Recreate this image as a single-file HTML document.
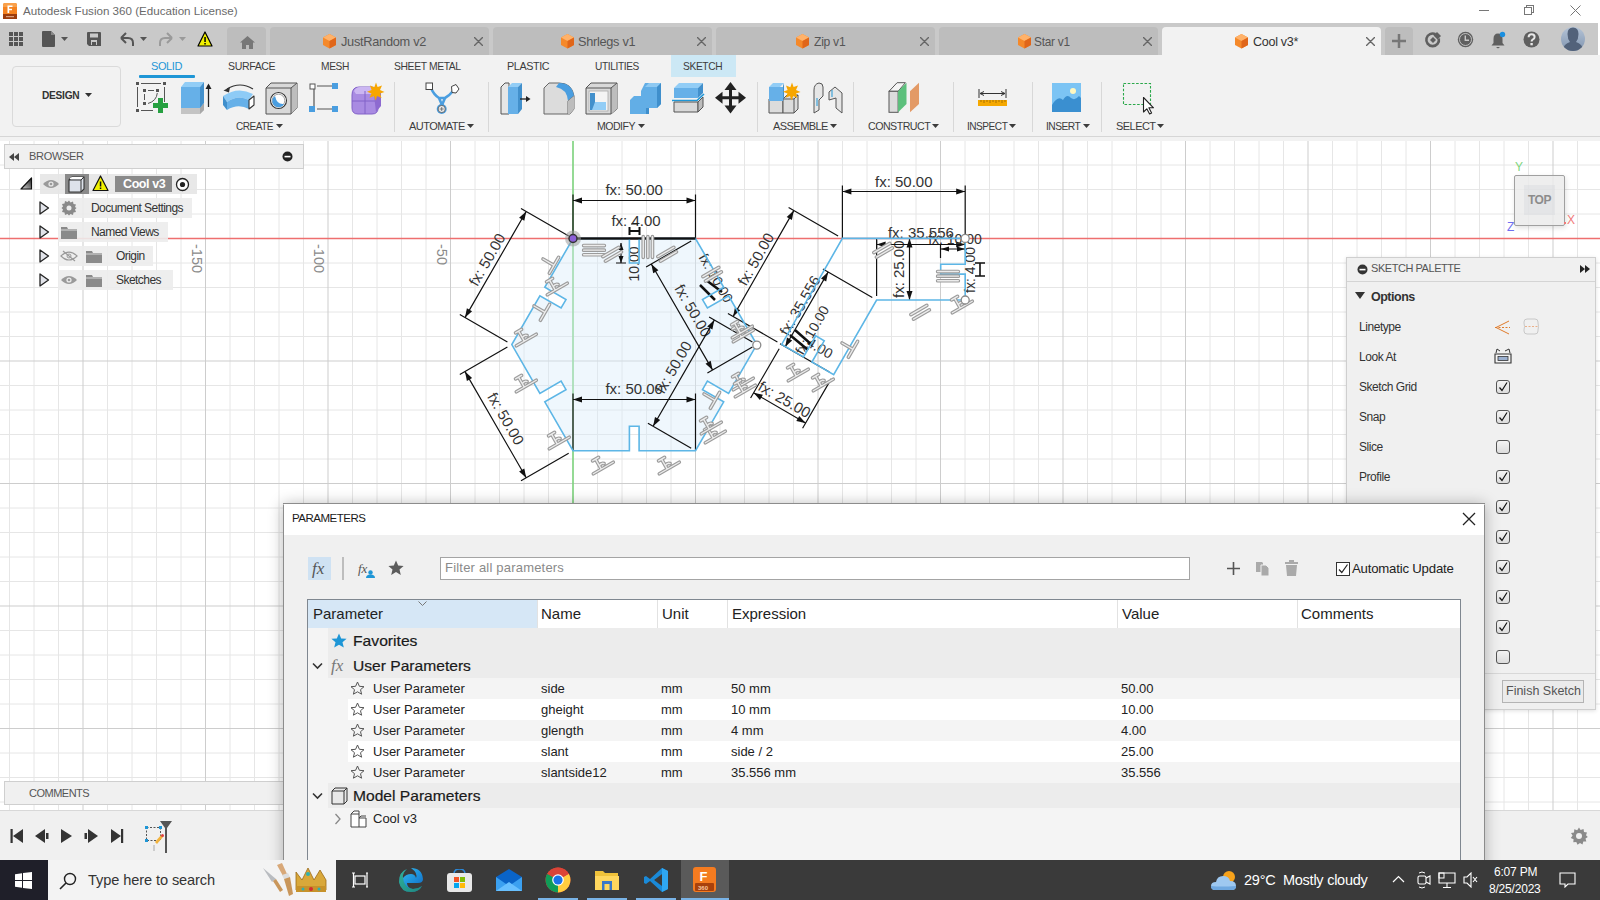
<!DOCTYPE html>
<html><head><meta charset="utf-8">
<style>
*{margin:0;padding:0;box-sizing:border-box}
html,body{width:1600px;height:900px;overflow:hidden;background:#fff;font-family:"Liberation Sans",sans-serif;position:relative}
.a{position:absolute}
.t{position:absolute;white-space:nowrap;line-height:1}
#title{left:0;top:0;width:1600px;height:23px;background:#fff}
#tabbar{left:0;top:23px;width:1600px;height:32px;background:#c9c9c9}
.tab{position:absolute;top:4px;height:28px;background:#bdbdbd;border-radius:4px 4px 0 0}
.tab .tx{position:absolute;top:8px;font-size:13.2px;letter-spacing:-0.3px;color:#555;white-space:nowrap;line-height:1}
#toolbar{left:0;top:55px;width:1600px;height:82px;background:#f2f2f2;border-bottom:1px solid #d6d6d6}
.tl{position:absolute;top:7px;font-size:11px;color:#3c3c3c;line-height:1;white-space:nowrap}
.gl{position:absolute;top:66px;font-size:11px;color:#3c3c3c;line-height:1;white-space:nowrap}
.sep{position:absolute;top:27px;width:1px;height:50px;background:#d8d8d8}
#canvas{left:0;top:137px;width:1600px;height:673px;background:#fff;overflow:hidden}
#timeline{left:0;top:810px;width:1600px;height:50px;background:#f0f0f0;border-top:1px solid #d8d8d8}
#taskbar{left:0;top:860px;width:1600px;height:40px;background:#3a3a3a}
</style></head><body>
<svg width="0" height="0" style="position:absolute"><defs><g id="cube"><path d="M7.5 1L14 4.5V12L7.5 15.5L1 12V4.5Z" fill="#f5892a"/><path d="M7.5 1L14 4.5L7.5 8L1 4.5Z" fill="#ffb26a"/><path d="M7.5 8L14 4.5V12L7.5 15.5Z" fill="#e0661a"/></g><g id="xx"><path d="M0.5 0.5L8.5 8.5M8.5 0.5L0.5 8.5" stroke="#666" stroke-width="1.4" stroke-linecap="round"/></g></defs></svg>
<!-- TITLE BAR -->
<div id="title" class="a">
 <svg class="a" style="left:2px;top:2px" width="16" height="18"><path d="M1 3Q1 1 3 1H13Q15 1 15 3V16H1Z" fill="#f5821f"/><path d="M1 3Q1 1 3 1H13Q15 1 15 3V5H1Z" fill="#f9a04a"/><rect x="1" y="12" width="14" height="5" fill="#9c3b0c"/><path d="M5.5 3.5H10.5V5H7.2V6.8H10V8.3H7.2V11H5.5Z" fill="#fff"/><rect x="4" y="14" width="8" height="1.2" fill="#d9a080"/></svg>
 <div class="t" style="left:23px;top:5px;font-size:11.6px;color:#6a6a6a">Autodesk Fusion 360 (Education License)</div>
 <div class="a" style="left:1479px;top:10px;width:10px;height:1px;background:#777"></div>
 <div class="a" style="left:1526px;top:5px;width:8px;height:8px;border:1px solid #777"></div>
 <div class="a" style="left:1524px;top:7px;width:8px;height:8px;border:1px solid #777;background:#fff"></div>
 <svg class="a" style="left:1570px;top:5px" width="11" height="11"><path d="M0.5 0.5L10.5 10.5M10.5 0.5L0.5 10.5" stroke="#777" stroke-width="1"/></svg>
</div>
<!-- TAB BAR -->
<div id="tabbar" class="a">
 <svg class="a" style="left:9px;top:9px" width="15" height="15"><g fill="#555"><rect x="0" y="0" width="4" height="4"/><rect x="5" y="0" width="4" height="4"/><rect x="10" y="0" width="4" height="4"/><rect x="0" y="5" width="4" height="4"/><rect x="5" y="5" width="4" height="4"/><rect x="10" y="5" width="4" height="4"/><rect x="0" y="10" width="4" height="4"/><rect x="5" y="10" width="4" height="4"/><rect x="10" y="10" width="4" height="4"/></g></svg>
 <svg class="a" style="left:42px;top:8px" width="28" height="17"><path d="M0 1Q0 0 1 0H9L13 4V15Q13 16 12 16H1Q0 16 0 15Z" fill="#555"/><path d="M9 0V4H13" fill="#888"/><path d="M19 6H26L22.5 10Z" fill="#555"/></svg>
 <svg class="a" style="left:87px;top:9px" width="15" height="15"><path d="M0 1Q0 0 1 0H13Q14 0 14 1V14H2L0 12Z" fill="#555"/><rect x="3" y="1.5" width="8" height="4" fill="#c9c9c9"/><rect x="4" y="8" width="6" height="5" fill="#c9c9c9"/><rect x="5" y="10" width="4" height="3" fill="#555"/></svg>
 <svg class="a" style="left:120px;top:9px" width="28" height="15"><path d="M1 6L6 1M1 6L6 11M1 6H8Q13 6 13 11V14" stroke="#555" stroke-width="2" fill="none"/><path d="M20 5H27L23.5 9Z" fill="#555"/></svg>
 <svg class="a" style="left:159px;top:9px" width="28" height="15"><path d="M13 6L8 1M13 6L8 11M13 6H6Q1 6 1 11V14" stroke="#9a9a9a" stroke-width="2" fill="none"/><path d="M20 5H27L23.5 9Z" fill="#9a9a9a"/></svg>
 <svg class="a" style="left:197px;top:8px" width="16" height="16"><path d="M8 1L15 15H1Z" fill="#f0f000" stroke="#000" stroke-width="1.2" stroke-linejoin="round"/><rect x="7.3" y="6" width="1.5" height="5" fill="#000"/><rect x="7.3" y="12" width="1.5" height="1.5" fill="#000"/></svg>
 <div class="tab" style="left:227px;width:39px"><svg class="a" style="left:13px;top:9px" width="15" height="13"><path d="M7.5 0L15 6.5H13V13H9V9H6V13H2V6.5H0Z" fill="#777"/></svg></div>
 <div class="tab" style="left:270px;width:219px"><svg class="a cube" style="left:52px;top:6px" width="15" height="16"><use href="#cube"/></svg><div class="tx" style="left:71px;transform:scaleX(0.97);transform-origin:0 0">JustRandom v2</div><svg class="a" style="left:204px;top:10px" width="9" height="9"><use href="#xx"/></svg></div>
 <div class="tab" style="left:493px;width:219px"><svg class="a" style="left:67px;top:6px" width="15" height="16"><use href="#cube"/></svg><div class="tx" style="left:85px;transform:scaleX(0.966);transform-origin:0 0">Shrlegs v1</div><svg class="a" style="left:204px;top:10px" width="9" height="9"><use href="#xx"/></svg></div>
 <div class="tab" style="left:716px;width:219px"><svg class="a" style="left:79px;top:6px" width="15" height="16"><use href="#cube"/></svg><div class="tx" style="left:98px;transform:scaleX(0.92);transform-origin:0 0">Zip v1</div><svg class="a" style="left:204px;top:10px" width="9" height="9"><use href="#xx"/></svg></div>
 <div class="tab" style="left:939px;width:219px"><svg class="a" style="left:78px;top:6px" width="15" height="16"><use href="#cube"/></svg><div class="tx" style="left:95px;transform:scaleX(0.9);transform-origin:0 0">Star v1</div><svg class="a" style="left:204px;top:10px" width="9" height="9"><use href="#xx"/></svg></div>
 <div class="tab" style="left:1162px;width:219px;background:#f2f2f2"><svg class="a" style="left:72px;top:6px" width="15" height="16"><use href="#cube"/></svg><div class="tx" style="left:91px;color:#333;transform:scaleX(0.95);transform-origin:0 0">Cool v3*</div><svg class="a" style="left:204px;top:10px" width="9" height="9"><use href="#xx"/></svg></div>
 <div class="tab" style="left:1385px;width:28px;background:#bdbdbd"><svg class="a" style="left:7px;top:7px" width="14" height="14"><path d="M7 0V14M0 7H14" stroke="#777" stroke-width="2.5"/></svg></div>
 <svg class="a" style="left:1424px;top:8px" width="18" height="18"><path d="M11.5 3.2A6.3 6.3 0 1 0 14.8 7.5" fill="none" stroke="#5f5f5f" stroke-width="2.6"/><path d="M9.5 4.5L13 1L17 5L13.5 8.5Z" fill="#5f5f5f"/><path d="M6 9L9 6L12 9L9 12Z" fill="#5f5f5f"/></svg>
 <svg class="a" style="left:1457px;top:8px" width="17" height="17"><circle cx="8.5" cy="8.5" r="7.7" fill="#5f5f5f"/><circle cx="8.5" cy="8.5" r="6" fill="none" stroke="#c9c9c9" stroke-width="0.9"/><path d="M8.3 4.5V9.3H12" stroke="#c9c9c9" stroke-width="1.4" fill="none"/></svg>
 <svg class="a" style="left:1490px;top:8px" width="17" height="18"><path d="M8 2.5Q12.5 2.5 12.5 8V12L14.5 14.5H1.5L3.5 12V8Q3.5 2.5 8 2.5Z" fill="#5f5f5f"/><path d="M6 16H10L8 17.5Z" fill="#5f5f5f"/><circle cx="12.5" cy="3.5" r="2.7" fill="#1a8fe0"/></svg>
 <svg class="a" style="left:1523px;top:8px" width="17" height="17"><circle cx="8.5" cy="8.5" r="8" fill="#5f5f5f"/><path d="M5.6 6.3Q5.6 3.3 8.6 3.3Q11.6 3.3 11.6 6Q11.6 7.7 9.6 8.7Q8.6 9.3 8.6 10.6" fill="none" stroke="#e8e8e8" stroke-width="2"/><rect x="7.4" y="12" width="2.4" height="2.3" fill="#e8e8e8"/></svg>
 <svg class="a" style="left:1561px;top:4px" width="24" height="24"><defs><linearGradient id="av" x1="0" y1="0" x2="0" y2="1"><stop offset="0" stop-color="#b4c3d6"/><stop offset="1" stop-color="#8195b0"/></linearGradient><clipPath id="avc"><circle cx="12" cy="12" r="12"/></clipPath></defs><circle cx="12" cy="12" r="12" fill="url(#av)"/><path clip-path="url(#avc)" d="M12 0.5Q17.5 0.5 17.5 7Q17.5 12 15 15Q21 16.5 23 24H1Q3 16.5 9 15Q6.5 12 6.5 7Q6.5 0.5 12 0.5Z" fill="#52627a"/></svg>
 <div class="a" style="left:1598px;top:0;width:2px;height:32px;background:#fff"></div>
</div>
<!-- TOOLBAR -->
<div id="toolbar" class="a">
 <div class="a" style="left:12px;top:11px;width:109px;height:61px;border:1px solid #dadada;border-radius:4px"></div>
 <div class="t" style="left:42px;top:35px;font-size:11px;font-weight:bold;letter-spacing:-0.3px;color:#333;transform:scaleX(0.925);transform-origin:0 0">DESIGN</div>
 <svg class="a" style="left:85px;top:38px" width="7" height="5"><path d="M0 0H7L3.5 4Z" fill="#333"/></svg>
 <div class="t" style="left:151px;top:6px;font-size:11px;letter-spacing:-0.4px;color:#1e96d6">SOLID</div>
 <div class="a" style="left:139px;top:20px;width:56px;height:3px;background:#1e96d6;border-radius:1px"></div>
 <div class="t" style="left:228px;top:6px;font-size:11px;letter-spacing:-0.4px;color:#3c3c3c;transform:scaleX(0.96);transform-origin:0 0">SURFACE</div>
 <div class="t" style="left:321px;top:6px;font-size:11px;letter-spacing:-0.4px;color:#3c3c3c;transform:scaleX(0.93);transform-origin:0 0">MESH</div>
 <div class="t" style="left:394px;top:6px;font-size:11px;letter-spacing:-0.4px;color:#3c3c3c;transform:scaleX(0.94);transform-origin:0 0">SHEET METAL</div>
 <div class="t" style="left:507px;top:6px;font-size:11px;letter-spacing:-0.4px;color:#3c3c3c;transform:scaleX(0.98);transform-origin:0 0">PLASTIC</div>
 <div class="t" style="left:595px;top:6px;font-size:11px;letter-spacing:-0.4px;color:#3c3c3c;transform:scaleX(0.92);transform-origin:0 0">UTILITIES</div>
 <div class="a" style="left:671px;top:0px;width:65px;height:22px;background:#cce8f5"></div>
 <div class="t" style="left:683px;top:6px;font-size:11px;letter-spacing:-0.4px;color:#3c3c3c;transform:scaleX(0.93);transform-origin:0 0">SKETCH</div>

 <!-- create sketch -->
<svg class="a" style="left:136px;top:27px" width="36" height="33"><g fill="#555"><rect x="0" y="0" width="3" height="3"/><rect x="27" y="0" width="3" height="3"/><rect x="0" y="27" width="3" height="3"/><rect x="7" y="7" width="3" height="3"/><rect x="20" y="7" width="3" height="3"/><rect x="7" y="20" width="3" height="3"/></g><path d="M1.5 5V25M5 1.5H25M28.5 5V20M5 28.5H17M8.5 12V18M12 8.5H18M21.3 11Q20.5 19 12 21.5" stroke="#555" stroke-width="1" fill="none"/><path d="M22 16H27V21H32V26H27V31H22V26H17V21H22Z" fill="#26a041"/></svg>
 <!-- extrude -->
<svg class="a" style="left:180px;top:27px" width="32" height="33"><path d="M1 26H20L24 21V28L20 32H1Z" fill="#c4c4c4"/><path d="M20 26L24 21V28L20 32Z" fill="#a8a8a8"/><path d="M1 5L5 0H24L20 5Z" fill="#92cdf6"/><rect x="1" y="5" width="19" height="21" fill="#66b0e8"/><path d="M20 5L24 0V21L20 26Z" fill="#4290cc"/><path d="M28.5 3V25" stroke="#222" stroke-width="1.3"/><path d="M25.5 7L28.5 1.5L31.5 7Z" fill="#222"/></svg>
 <!-- revolve -->
<svg class="a" style="left:222px;top:27px" width="35" height="33"><path d="M5 7Q18 -1 31 7" stroke="#333" stroke-width="1.2" fill="none"/><path d="M1.5 8.5L8 5L7 10.5Z" fill="#333"/><path d="M1 14Q16 4 31 12L27 18Q16 12 5 20Z" fill="#8ecbf6"/><path d="M5 20Q16 12 27 18V27Q16 21 5 28Z" fill="#66b0e8"/><path d="M1 14L5 20V28L1 23Z" fill="#3f8fcc"/><path d="M27 18L32 14V23L27 27Z" fill="#fff" stroke="#333" stroke-width="1.1" stroke-linejoin="round"/></svg>
 <!-- hole -->
<svg class="a" style="left:265px;top:27px" width="34" height="33"><path d="M1 6L6 1H32V26L26 32H1Z" fill="#d9d9d9" stroke="#555" stroke-width="1" stroke-linejoin="round"/><path d="M26 6L32 1V26L26 32Z" fill="#bdbdbd"/><path d="M1 6H26V32M26 6L32 1" stroke="#555" stroke-width="1" fill="none"/><circle cx="13.5" cy="18.5" r="8" fill="#fff" stroke="#333" stroke-width="1.1"/><circle cx="13.5" cy="18.5" r="6.3" fill="#fff" stroke="#666" stroke-width="0.6"/><path d="M8 16A6 6 0 0 0 19 22Q12 23 10 14Z" fill="#4a9ee0"/></svg>
 <!-- pattern -->
 <svg class="a" style="left:309px;top:28px" width="29" height="31"><path d="M5 5V26M8 3H23M8 26H23" stroke="#555" stroke-width="1.2" fill="none"/><rect x="1" y="1" width="5" height="5" fill="#fff" stroke="#555" stroke-width="1"/><rect x="23" y="0" width="6" height="6" fill="#4a9ee0"/><rect x="0" y="23" width="6" height="6" fill="#4a9ee0"/><rect x="23" y="23" width="6" height="6" fill="#4a9ee0"/></svg>
 <!-- form -->
<svg class="a" style="left:351px;top:27px" width="34" height="33"><path d="M1 13Q1 5 8 5H20Q27 5 27 12V26Q27 32 21 32H7Q1 32 1 26Z" fill="#a98be2" stroke="#8262c8" stroke-width="1"/><path d="M3 9Q5 5 9 5H20Q25 5 26 9L24 12H5Z" fill="#cbb6f2"/><path d="M1 19H27M14 9V32" stroke="#8262c8" stroke-width="1"/><path d="M23 13L30 9V24L25 30Z" fill="#8d6ad0"/><path d="M25 0.5L26.6 5L31 3.5L29 8L33.5 10L29 11.5L30.5 16L26.2 14L24.5 18.5L23 14L18.5 15.8L20.5 11.5L16 9.8L20.6 8L19 3.5L23.3 5.2Z" fill="#f7a600"/></svg>
 <div class="t" style="left:236px;top:66px;font-size:11px;letter-spacing:-0.55px;color:#3c3c3c;transform:scaleX(0.915);transform-origin:0 0">CREATE</div>
 <svg class="a" style="left:276px;top:69px" width="7" height="5"><path d="M0 0H7L3.5 4Z" fill="#3c3c3c"/></svg>
 <div class="sep" style="left:394px"></div>
 <!-- automate -->
<svg class="a" style="left:424px;top:27px" width="36" height="33"><path d="M7 6Q10 13 15 16M29 9Q25 14 21 16M15 16H21L18 23Z" stroke="#4a9ee0" stroke-width="2.6" fill="none" stroke-linejoin="round"/><path d="M18 22V24" stroke="#4a9ee0" stroke-width="3"/><rect x="2" y="1" width="6.5" height="6.5" fill="#fff" stroke="#444" stroke-width="1"/><path d="M27.5 4.5L32 2.5L35 7L32 11L28 10.5Z" fill="#fff" stroke="#444" stroke-width="1"/><circle cx="17.7" cy="27" r="5" fill="#4a9ee0"/><circle cx="17.7" cy="27" r="3.6" fill="#e8e8e8" stroke="#555" stroke-width="0.8"/><path d="M17.7 25V29M15.7 27H19.7" stroke="#555" stroke-width="0.7"/></svg>
 <div class="t" style="left:409px;top:66px;font-size:11px;letter-spacing:-0.55px;color:#3c3c3c">AUTOMATE</div>
 <svg class="a" style="left:467px;top:69px" width="7" height="5"><path d="M0 0H7L3.5 4Z" fill="#3c3c3c"/></svg>
 <div class="sep" style="left:488px"></div>
 <!-- press pull -->
<svg class="a" style="left:500px;top:27px" width="32" height="33"><path d="M1 5L5 1H9V32H1Z" fill="#e6e6e6" stroke="#555" stroke-width="1" stroke-linejoin="round"/><path d="M8 5L12 1H22L18 5Z" fill="#92cdf6"/><path d="M8 5H18V32H8Z" fill="#66b0e8"/><path d="M18 5L22 1V27L18 32Z" fill="#4290cc"/><path d="M20 17H27" stroke="#222" stroke-width="1.3"/><path d="M26 14L30.5 17L26 20Z" fill="#222"/></svg>
 <!-- fillet -->
 <svg class="a" style="left:543px;top:27px" width="32" height="33"><path d="M1 6L6 1H16Q29 1 31 14V27L27 32H1Z" fill="#dcdcdc" stroke="#666" stroke-width="1"/><path d="M16 1Q29 1 31 14L25 19Q24 7 13 5Z" fill="#4a9ee0"/><path d="M25 19V32M25 19L31 14" stroke="#666" stroke-width="1" fill="none"/><path d="M25 19L31 14V27L27 32H25Z" fill="#bdbdbd"/></svg>
 <!-- shell -->
<svg class="a" style="left:585px;top:27px" width="33" height="33"><path d="M1 6L6 1H32V27L26 32H1Z" fill="#d9d9d9" stroke="#555" stroke-width="1" stroke-linejoin="round"/><path d="M26 6L32 1V27L26 32Z" fill="#bdbdbd"/><path d="M1 6H26V32M26 6L32 1" stroke="#555" stroke-width="1" fill="none"/><rect x="4" y="9" width="19" height="20" fill="#f4f4f4" stroke="#aaa" stroke-width="0.8"/><path d="M5 11H10V20L21 20V28H5Z" fill="#4290cc"/><path d="M10 20H21V28H7Z" fill="#92cdf6"/></svg>
 <!-- combine -->
 <svg class="a" style="left:629px;top:27px" width="33" height="33"><path d="M1 18L5 14H12V32H1Z" fill="#62aee6"/><path d="M12 9L16 1H32V22L28 26H20V32H1V18H12Z" fill="#62aee6"/><path d="M16 5L20 1H32L28 5Z" fill="#8ec9f2"/><path d="M28 5L32 1V22L28 26Z" fill="#3f8fcc"/><path d="M20 26V32L17 32V26Z" fill="#3f8fcc"/></svg>
 <!-- split -->
<svg class="a" style="left:672px;top:27px" width="33" height="33"><path d="M2 6L7 1H31L26 6Z" fill="#92cdf6"/><rect x="2" y="6" width="24" height="10" fill="#66b0e8"/><path d="M26 6L31 1V11L26 16Z" fill="#4290cc"/><path d="M0 18.5H25L32 12" stroke="#1e96d6" stroke-width="1.6" fill="none"/><path d="M2 20H26V30H2Z" fill="#d9d9d9" stroke="#555" stroke-width="1"/><path d="M26 20L31 15V25L26 30Z" fill="#bdbdbd" stroke="#555" stroke-width="1" stroke-linejoin="round"/></svg>
 <!-- move -->
<svg class="a" style="left:715px;top:27px" width="32" height="33"><path d="M15.5 0L21.5 8H17V14.2H23.5V9.7L31 15.7L23.5 21.7V17.2H17V23.5H21.5L15.5 31.5L9.5 23.5H14V17.2H7.5V21.7L0 15.7L7.5 9.7V14.2H14V8H9.5Z" fill="#222"/></svg>
 <div class="t" style="left:597px;top:66px;font-size:11px;letter-spacing:-0.55px;color:#3c3c3c;transform:scaleX(0.96);transform-origin:0 0">MODIFY</div>
 <svg class="a" style="left:638px;top:69px" width="7" height="5"><path d="M0 0H7L3.5 4Z" fill="#3c3c3c"/></svg>
 <div class="sep" style="left:757px"></div>
 <!-- assemble new comp -->
<svg class="a" style="left:768px;top:27px" width="33" height="33"><path d="M1 17H15V31H1Z" fill="#dcdcdc" stroke="#555" stroke-width="1"/><path d="M15 17L19 13H30V27L26 31H15Z" fill="#dcdcdc" stroke="#555" stroke-width="1" stroke-linejoin="round"/><path d="M15 17H26V31M26 17L30 13" stroke="#555" stroke-width="1" fill="none"/><path d="M1 5L5 1H16L12 5Z" fill="#92cdf6"/><rect x="1" y="5" width="14" height="14" fill="#66b0e8"/><path d="M15 4L16 1V15L15 19Z" fill="#4290cc"/><path d="M24 0.5L25.6 5L30 3.5L28 8L32.5 10L28 11.5L29.5 16L25.2 14L23.5 18.5L22 14L17.5 15.8L19.5 11.5L15 9.8L19.6 8L18 3.5L22.3 5.2Z" fill="#f7a600"/></svg>
 <!-- joint -->
 <svg class="a" style="left:813px;top:27px" width="30" height="33"><path d="M1 8Q1 2 6 1Q10 1 10 5V14L6 18V28L1 31Z" fill="#e6e6e6" stroke="#555" stroke-width="1"/><path d="M16 10L22 5L29 11V31L23 26V16L16 18Z" fill="#e6e6e6" stroke="#555" stroke-width="1"/><path d="M4 16V24M19 8V15" stroke="#1e96d6" stroke-width="1"/></svg>
 <div class="t" style="left:773px;top:66px;font-size:11px;letter-spacing:-0.55px;color:#3c3c3c">ASSEMBLE</div>
 <svg class="a" style="left:830px;top:69px" width="7" height="5"><path d="M0 0H7L3.5 4Z" fill="#3c3c3c"/></svg>
 <div class="sep" style="left:853px"></div>
 <!-- construct -->
<svg class="a" style="left:888px;top:27px" width="32" height="33"><path d="M1 9.3L9.1 0.7H17.4L10.1 9.3Z" fill="#f4f4f4" stroke="#555" stroke-width="1" stroke-linejoin="round"/><rect x="1" y="9.3" width="9.1" height="21" fill="#dcdcdc" stroke="#555" stroke-width="1"/><path d="M10.1 9.3L18.5 0.7V22L10.1 30.3Z" fill="#5cc07c"/><path d="M22 9.3L31 0.7V22L22 30.3Z" fill="#e39a66"/></svg>
 <div class="t" style="left:868px;top:66px;font-size:11px;letter-spacing:-0.55px;color:#3c3c3c;transform:scaleX(0.97);transform-origin:0 0">CONSTRUCT</div>
 <svg class="a" style="left:932px;top:69px" width="7" height="5"><path d="M0 0H7L3.5 4Z" fill="#3c3c3c"/></svg>
 <div class="sep" style="left:953px"></div>
 <!-- inspect -->
 <svg class="a" style="left:978px;top:34px" width="30" height="18"><path d="M1 0V9M28 0V9M2 4.5H27M2 4.5L6 2.5M2 4.5L6 6.5M27 4.5L23 2.5M27 4.5L23 6.5" stroke="#333" stroke-width="1" fill="none"/><rect x="0" y="11" width="29" height="6" fill="#f5a800"/><path d="M3 11V13M6 11V14M9 11V13M12 11V14M15 11V13M18 11V14M21 11V13M24 11V14M27 11V13" stroke="#8a5a00" stroke-width="0.7"/></svg>
 <div class="t" style="left:967px;top:66px;font-size:11px;letter-spacing:-0.55px;color:#3c3c3c;transform:scaleX(0.92);transform-origin:0 0">INSPECT</div>
 <svg class="a" style="left:1009px;top:69px" width="7" height="5"><path d="M0 0H7L3.5 4Z" fill="#3c3c3c"/></svg>
 <div class="sep" style="left:1032px"></div>
 <!-- insert -->
 <svg class="a" style="left:1052px;top:28px" width="29" height="29"><rect x="0" y="0" width="29" height="29" fill="#7cc4f4"/><path d="M0 22Q6 12 11 17Q15 10 19 15Q23 18 27 13L29 15V29H0Z" fill="#3a8fd0"/><circle cx="21" cy="8" r="3" fill="#fff7c0"/></svg>
 <div class="t" style="left:1046px;top:66px;font-size:11px;letter-spacing:-0.55px;color:#3c3c3c;transform:scaleX(0.93);transform-origin:0 0">INSERT</div>
 <svg class="a" style="left:1083px;top:69px" width="7" height="5"><path d="M0 0H7L3.5 4Z" fill="#3c3c3c"/></svg>
 <div class="sep" style="left:1101px"></div>
 <!-- select -->
<svg class="a" style="left:1122px;top:27px" width="32" height="33"><rect x="1.5" y="1.5" width="27" height="21" fill="none" stroke="#2aa84a" stroke-width="1.1" stroke-dasharray="2.6 1.6"/><path d="M21.5 15.5V30L24.8 26.8L27.6 32L29.6 31L26.9 25.8H31.5Z" fill="#fff" stroke="#222" stroke-width="1.1" stroke-linejoin="round"/></svg>
 <div class="t" style="left:1116px;top:66px;font-size:11px;letter-spacing:-0.55px;color:#3c3c3c">SELECT</div>
 <svg class="a" style="left:1157px;top:69px" width="7" height="5"><path d="M0 0H7L3.5 4Z" fill="#3c3c3c"/></svg>
</div>
<!-- CANVAS -->
<div id="canvas" class="a">
<svg class="a" style="left:0;top:0" width="1600" height="673" viewBox="0 0 1600 673">
<path d="M9.5 0V673M34 0V673M58.5 0V673M107.5 0V673M132 0V673M156.5 0V673M181 0V673M230 0V673M254.5 0V673M279 0V673M303.5 0V673M352.5 0V673M377 0V673M401.5 0V673M426 0V673M475 0V673M499.5 0V673M524 0V673M548.5 0V673M597.5 0V673M622 0V673M646.5 0V673M671 0V673M720 0V673M744.5 0V673M769 0V673M793.5 0V673M842.5 0V673M867 0V673M891.5 0V673M916 0V673M965 0V673M989.5 0V673M1014 0V673M1038.5 0V673M1087.5 0V673M1112 0V673M1136.5 0V673M1161 0V673M1210 0V673M1234.5 0V673M1259 0V673M1283.5 0V673M1332.5 0V673M1357 0V673M1381.5 0V673M1406 0V673M1455 0V673M1479.5 0V673M1504 0V673M1528.5 0V673M1577.5 0V673M0 3.5H1600M0 28H1600M0 52.5H1600M0 77H1600M0 126H1600M0 150.5H1600M0 175H1600M0 199.5H1600M0 248.5H1600M0 273H1600M0 297.5H1600M0 322H1600M0 371H1600M0 395.5H1600M0 420H1600M0 444.5H1600M0 493.5H1600M0 518H1600M0 542.5H1600M0 567H1600M0 616H1600M0 640.5H1600M0 665H1600" stroke="#e6e6e6" stroke-width="1"/>
<path d="M83 0V673M205.5 0V673M328 0V673M450.5 0V673M573 0V673M695.5 0V673M818 0V673M940.5 0V673M1063 0V673M1185.5 0V673M1308 0V673M1430.5 0V673M1553 0V673M0 101.5H1600M0 224H1600M0 346.5H1600M0 469H1600M0 591.5H1600" stroke="#cdcdcd" stroke-width="1"/>
<path d="M573 0V673" stroke="#6ad46a" stroke-width="1.3"/>
<path d="M0 101.5H1600" stroke="#ee6f6f" stroke-width="1.6"/>
</svg>
<div class="a" style="left:0;top:0;width:1600px;height:4px;background:#f2f2f2"></div>
<div class="t" style="left:189px;top:107px;font-size:14.5px;color:#8a8a8a;transform:rotate(90deg);transform-origin:0 0;left:204px">-150</div>
<div class="t" style="left:326px;top:107px;font-size:14.5px;color:#8a8a8a;transform:rotate(90deg);transform-origin:0 0">-100</div>
<div class="t" style="left:449px;top:107px;font-size:14.5px;color:#8a8a8a;transform:rotate(90deg);transform-origin:0 0">-50</div>
<svg class="a" style="left:0;top:0" width="1600" height="673" viewBox="0 137 1600 673" font-family="Liberation Sans">
<path d="M573.0 238.5 L629.4 238.5 L629.4 263.0 L639.1 263.0 L639.1 238.5 L695.5 238.5 L723.7 287.3 L702.5 299.6 L707.4 308.0 L728.6 295.8 L756.8 344.6 L728.6 393.4 L707.4 381.1 L702.5 389.6 L723.7 401.9 L695.5 450.7 L639.1 450.7 L639.1 426.2 L629.4 426.2 L629.4 450.7 L573.0 450.7 L544.8 401.9 L566.0 389.6 L561.1 381.1 L539.9 393.4 L511.8 344.6 L539.9 295.8 L561.1 308.0 L566.0 299.6 L544.8 287.3 Z" fill="#d8ebfb" fill-opacity="0.42" stroke="none"/>
<path d="M573.0 238.5L573.0 194.5M695.5 238.5L695.5 194.5M573.0 200.5L695.5 200.5" stroke="#111" stroke-width="1.2" fill="none"/>
<path d="M573.0 200.5L582.0 197.5L582.0 203.5Z" fill="#111"/>
<path d="M695.5 200.5L686.5 203.5L686.5 197.5Z" fill="#111"/>
<text x="634.2" y="189.5" transform="rotate(0.0 634.2 189.5)" font-size="15" fill="#333" text-anchor="middle" dominant-baseline="central">fx: 50.00</text>
<path d="M507.4 342.1L459.8 314.6M568.7 236.0L521.0 208.5M465.0 317.6L526.2 211.5" stroke="#111" stroke-width="1.2" fill="none"/>
<path d="M465.0 317.6L466.9 308.3L472.1 311.3Z" fill="#111"/>
<path d="M526.2 211.5L524.3 220.8L519.1 217.8Z" fill="#111"/>
<text x="486.9" y="259.5" transform="rotate(-60.0 486.9 259.5)" font-size="15" fill="#333" text-anchor="middle" dominant-baseline="central">fx: 50.00</text>
<path d="M568.7 453.2L521.0 480.7M507.4 347.1L459.8 374.6M526.2 477.7L465.0 371.6" stroke="#111" stroke-width="1.2" fill="none"/>
<path d="M526.2 477.7L519.1 471.4L524.3 468.4Z" fill="#111"/>
<path d="M465.0 371.6L472.1 377.9L466.9 380.9Z" fill="#111"/>
<text x="506.0" y="418.6" transform="rotate(60.0 506.0 418.6)" font-size="15" fill="#333" text-anchor="middle" dominant-baseline="central">fx: 50.00</text>
<path d="M695.5 450.7L695.5 393.5M573.0 450.7L573.0 393.5M695.5 399.5L573.0 399.5" stroke="#111" stroke-width="1.2" fill="none"/>
<path d="M695.5 399.5L686.5 402.5L686.5 396.5Z" fill="#111"/>
<path d="M573.0 399.5L582.0 396.5L582.0 402.5Z" fill="#111"/>
<text x="634.2" y="388.5" transform="rotate(0.0 634.2 388.5)" font-size="15" fill="#333" text-anchor="middle" dominant-baseline="central">fx: 50.00</text>
<path d="M691.2 241.0L646.1 267.0M752.4 347.1L707.4 373.1M651.3 264.0L712.6 370.1" stroke="#111" stroke-width="1.2" fill="none"/>
<path d="M651.3 264.0L658.4 270.3L653.2 273.3Z" fill="#111"/>
<path d="M712.6 370.1L705.5 363.8L710.7 360.8Z" fill="#111"/>
<text x="693.2" y="310.5" transform="rotate(60.0 693.2 310.5)" font-size="15" fill="#333" text-anchor="middle" dominant-baseline="central">fx: 50.00</text>
<path d="M752.4 342.1L709.1 317.1M691.2 448.2L647.9 423.2M714.3 320.1L653.1 426.2" stroke="#111" stroke-width="1.2" fill="none"/>
<path d="M714.3 320.1L712.4 329.4L707.2 326.4Z" fill="#111"/>
<path d="M653.1 426.2L655.0 416.9L660.2 419.9Z" fill="#111"/>
<text x="673.3" y="367.1" transform="rotate(-60.0 673.3 367.1)" font-size="15" fill="#333" text-anchor="middle" dominant-baseline="central">fx: 50.00</text>
<path d="M842.4 238.4L842.4 185.5M965.2 238.4L965.2 185.5M842.4 191.5L965.2 191.5" stroke="#111" stroke-width="1.2" fill="none"/>
<path d="M842.4 191.5L851.4 188.5L851.4 194.5Z" fill="#111"/>
<path d="M965.2 191.5L956.2 194.5L956.2 188.5Z" fill="#111"/>
<text x="903.8" y="181.5" transform="rotate(0.0 903.8 181.5)" font-size="15" fill="#333" text-anchor="middle" dominant-baseline="central">fx: 50.00</text>
<path d="M777.4 341.9L727.9 313.6M838.1 235.9L788.6 207.6M733.1 316.6L793.8 210.6" stroke="#111" stroke-width="1.2" fill="none"/>
<path d="M733.1 316.6L735.0 307.3L740.2 310.3Z" fill="#111"/>
<path d="M793.8 210.6L791.9 219.9L786.7 216.9Z" fill="#111"/>
<text x="755.6" y="259.1" transform="rotate(-60.2 755.6 259.1)" font-size="15" fill="#333" text-anchor="middle" dominant-baseline="central">fx: 50.00</text>
<path d="M831.2 378.9L802.6 428.2M779.2 348.7L750.6 398.0M805.6 423.0L753.6 392.8" stroke="#111" stroke-width="1.2" fill="none"/>
<path d="M805.6 423.0L796.3 421.1L799.3 415.9Z" fill="#111"/>
<path d="M753.6 392.8L762.9 394.8L759.9 399.9Z" fill="#111"/>
<text x="784.6" y="399.3" transform="rotate(30.1 784.6 399.3)" font-size="15" fill="#333" text-anchor="middle" dominant-baseline="central">fx: 25.00</text>
<path d="M872.3 297.5L822.9 269.1M829.4 372.1L780.0 343.7M828.1 272.1L785.2 346.7" stroke="#111" stroke-width="1.2" fill="none"/>
<path d="M828.1 272.1L826.2 281.4L821.0 278.4Z" fill="#111"/>
<path d="M785.2 346.7L787.0 337.4L792.2 340.4Z" fill="#111"/>
<text x="799.7" y="305.4" transform="rotate(-60.1 799.7 305.4)" font-size="15" fill="#333" text-anchor="middle" dominant-baseline="central">fx: 35.556</text>
<path d="M909.5 238.4L909.5 300.0" stroke="#111" stroke-width="1.2" fill="none"/>
<path d="M909.5 238.4L912.5 247.4L906.5 247.4Z" fill="#111"/>
<path d="M909.5 300.0L906.5 291.0L912.5 291.0Z" fill="#111"/>
<text x="898.5" y="269.2" transform="rotate(270.0 898.5 269.2)" font-size="15" fill="#333" text-anchor="middle" dominant-baseline="central">fx: 25.00</text>
<path d="M876.6 238.4L876.6 250.5M965.2 238.4L965.2 250.5M876.6 244.5L965.2 244.5" stroke="#111" stroke-width="1.2" fill="none"/>
<path d="M876.6 244.5L885.6 241.5L885.6 247.5Z" fill="#111"/>
<path d="M965.2 244.5L956.2 247.5L956.2 241.5Z" fill="#111"/>
<text x="920.9" y="232.5" transform="rotate(0.0 920.9 232.5)" font-size="15" fill="#333" text-anchor="middle" dominant-baseline="central">fx: 35.556</text>
<path d="M876.6 296V240" stroke="#111" stroke-width="1.2"/>
<text x="636" y="220" font-size="15" fill="#333" text-anchor="middle" dominant-baseline="central">fx: 4.00</text>
<path d="M573 238.5H695.5" stroke="#111" stroke-width="2"/>
<path d="M629.5 227V235M639.5 227V235M629.5 231H639.5" stroke="#111" stroke-width="2"/>
<path d="M631 224H638" stroke="#111" stroke-width="1"/>
<path d="M621 243V263M616 263H626" stroke="#111" stroke-width="1.2"/>
<path d="M621.0 243.0L623.5 250.0L618.5 250.0Z" fill="#111"/>
<path d="M621.0 263.0L618.5 256.0L623.5 256.0Z" fill="#111"/>
<text x="634" y="264" transform="rotate(-90 634 264)" font-size="14" fill="#333" text-anchor="middle" dominant-baseline="central">10.00</text>
<text x="955" y="239" font-size="14" fill="#333" text-anchor="middle" dominant-baseline="central">fx: 10.00</text>
<path d="M940.5 244V258M941 249H965" stroke="#111" stroke-width="1.2"/>
<path d="M965.0 249.0L957.0 251.5L957.0 246.5Z" fill="#111"/>
<path d="M941.0 249.0L949.0 246.5L949.0 251.5Z" fill="#111"/>
<path d="M980 263V276M975 263H985M975 276H985" stroke="#111" stroke-width="1.6"/>
<text x="970" y="270" transform="rotate(-90 970 270)" font-size="14" fill="#333" text-anchor="middle" dominant-baseline="central">fx: 4.00</text>
<text x="716" y="278" transform="rotate(60 716 278)" font-size="14" fill="#333" text-anchor="middle" dominant-baseline="central">fx: 10.00</text>
<text x="812" y="330" transform="rotate(-60 812 330)" font-size="14" fill="#333" text-anchor="middle" dominant-baseline="central">fx: 10.00</text>
<text x="820" y="348" transform="rotate(30 820 348)" font-size="14" fill="#333" text-anchor="middle" dominant-baseline="central">4.00</text>
<path d="M700 285L715 300M706 280L722 292M790 335L808 350M795 330L812 345" stroke="#111" stroke-width="2.5"/>
<path d="M573.0 238.5 L629.4 238.5 L629.4 263.0 L639.1 263.0 L639.1 238.5 L695.5 238.5 L723.7 287.3 L702.5 299.6 L707.4 308.0 L728.6 295.8 L756.8 344.6 L728.6 393.4 L707.4 381.1 L702.5 389.6 L723.7 401.9 L695.5 450.7 L639.1 450.7 L639.1 426.2 L629.4 426.2 L629.4 450.7 L573.0 450.7 L544.8 401.9 L566.0 389.6 L561.1 381.1 L539.9 393.4 L511.8 344.6 L539.9 295.8 L561.1 308.0 L566.0 299.6 L544.8 287.3 Z" fill="none" stroke="#5db6e6" stroke-width="1.6" stroke-linejoin="miter"/>
<path d="M842.4 238.4 L965.2 238.4 L965.2 264.3 L940.7 264.3 L940.7 274.1 L965.2 274.1 L965.2 300.0 L876.6 300.0 L833.7 374.6 L811.9 362.0 L824.2 340.8 L815.8 335.9 L803.5 357.0 L781.7 344.4 Z" fill="none" stroke="#5db6e6" stroke-width="1.6"/>
<path d="M573 238.5H695.5" stroke="#111" stroke-width="2"/>
<g transform="translate(550.0 263.0) rotate(-60.0) scale(1.15)" fill="none" stroke-linecap="round" stroke-linejoin="round"><path d="M-8 4H8M0 4V-7" stroke="#9c9c9c" stroke-width="3.2"/><path d="M-8 4H8M0 4V-7" stroke="#ececec" stroke-width="1.2"/></g>
<g transform="translate(555.0 285.0) rotate(-30.0) scale(1.15)" fill="none" stroke-linecap="round" stroke-linejoin="round"><path d="M-10 4H10M-5 -6H1M-2 -6V4M-2 0.5Q1 -1 2.5 1" stroke="#9c9c9c" stroke-width="3.2"/><path d="M-10 4H10M-5 -6H1M-2 -6V4M-2 0.5Q1 -1 2.5 1" stroke="#ececec" stroke-width="1.2"/></g>
<g transform="translate(541.0 310.0) rotate(-60.0) scale(1.15)" fill="none" stroke-linecap="round" stroke-linejoin="round"><path d="M-8 4H8M0 4V-7" stroke="#9c9c9c" stroke-width="3.2"/><path d="M-8 4H8M0 4V-7" stroke="#ececec" stroke-width="1.2"/></g>
<g transform="translate(524.0 336.0) rotate(-30.0) scale(1.15)" fill="none" stroke-linecap="round" stroke-linejoin="round"><path d="M-10 4H10M-5 -6H1M-2 -6V4M-2 0.5Q1 -1 2.5 1" stroke="#9c9c9c" stroke-width="3.2"/><path d="M-10 4H10M-5 -6H1M-2 -6V4M-2 0.5Q1 -1 2.5 1" stroke="#ececec" stroke-width="1.2"/></g>
<g transform="translate(524.0 382.0) rotate(-30.0) scale(1.15)" fill="none" stroke-linecap="round" stroke-linejoin="round"><path d="M-10 4H10M-5 -6H1M-2 -6V4M-2 0.5Q1 -1 2.5 1" stroke="#9c9c9c" stroke-width="3.2"/><path d="M-10 4H10M-5 -6H1M-2 -6V4M-2 0.5Q1 -1 2.5 1" stroke="#ececec" stroke-width="1.2"/></g>
<g transform="translate(557.0 439.0) rotate(-30.0) scale(1.15)" fill="none" stroke-linecap="round" stroke-linejoin="round"><path d="M-10 4H10M-5 -6H1M-2 -6V4M-2 0.5Q1 -1 2.5 1" stroke="#9c9c9c" stroke-width="3.2"/><path d="M-10 4H10M-5 -6H1M-2 -6V4M-2 0.5Q1 -1 2.5 1" stroke="#ececec" stroke-width="1.2"/></g>
<g transform="translate(601.0 464.0) rotate(-30.0) scale(1.15)" fill="none" stroke-linecap="round" stroke-linejoin="round"><path d="M-10 4H10M-5 -6H1M-2 -6V4M-2 0.5Q1 -1 2.5 1" stroke="#9c9c9c" stroke-width="3.2"/><path d="M-10 4H10M-5 -6H1M-2 -6V4M-2 0.5Q1 -1 2.5 1" stroke="#ececec" stroke-width="1.2"/></g>
<g transform="translate(667.0 464.0) rotate(-30.0) scale(1.15)" fill="none" stroke-linecap="round" stroke-linejoin="round"><path d="M-10 4H10M-5 -6H1M-2 -6V4M-2 0.5Q1 -1 2.5 1" stroke="#9c9c9c" stroke-width="3.2"/><path d="M-10 4H10M-5 -6H1M-2 -6V4M-2 0.5Q1 -1 2.5 1" stroke="#ececec" stroke-width="1.2"/></g>
<g transform="translate(713.0 433.0) rotate(-30.0) scale(1.15)" fill="none" stroke-linecap="round" stroke-linejoin="round"><path d="M-10 4H10M-5 -6H1M-2 -6V4M-2 0.5Q1 -1 2.5 1" stroke="#9c9c9c" stroke-width="3.2"/><path d="M-10 4H10M-5 -6H1M-2 -6V4M-2 0.5Q1 -1 2.5 1" stroke="#ececec" stroke-width="1.2"/></g>
<g transform="translate(711.0 398.0) rotate(-60.0) scale(1.15)" fill="none" stroke-linecap="round" stroke-linejoin="round"><path d="M-8 4H8M0 4V-7" stroke="#9c9c9c" stroke-width="3.2"/><path d="M-8 4H8M0 4V-7" stroke="#ececec" stroke-width="1.2"/></g>
<g transform="translate(741.0 380.0) rotate(-30.0) scale(1.15)" fill="none" stroke-linecap="round" stroke-linejoin="round"><path d="M-10 4H10M-5 -6H1M-2 -6V4M-2 0.5Q1 -1 2.5 1" stroke="#9c9c9c" stroke-width="3.2"/><path d="M-10 4H10M-5 -6H1M-2 -6V4M-2 0.5Q1 -1 2.5 1" stroke="#ececec" stroke-width="1.2"/></g>
<g transform="translate(741.0 332.0) rotate(-30.0) scale(1.15)" fill="none" stroke-linecap="round" stroke-linejoin="round"><path d="M-10 4H10M-5 -6H1M-2 -6V4M-2 0.5Q1 -1 2.5 1" stroke="#9c9c9c" stroke-width="3.2"/><path d="M-10 4H10M-5 -6H1M-2 -6V4M-2 0.5Q1 -1 2.5 1" stroke="#ececec" stroke-width="1.2"/></g>
<g transform="translate(594.0 249.0) rotate(0.0) scale(1.15)" fill="none" stroke-linecap="round" stroke-linejoin="round"><path d="M-9 -3H9M-9 1H9M-9 5H9" stroke="#9c9c9c" stroke-width="3.2"/><path d="M-9 -3H9M-9 1H9M-9 5H9" stroke="#ececec" stroke-width="1.2"/></g>
<g transform="translate(612.0 254.0) rotate(-30.0) scale(1.15)" fill="none" stroke-linecap="round" stroke-linejoin="round"><path d="M-8 -2H8M-8 2.5H8" stroke="#9c9c9c" stroke-width="3.2"/><path d="M-8 -2H8M-8 2.5H8" stroke="#ececec" stroke-width="1.2"/></g>
<g transform="translate(649.0 247.0) rotate(90.0) scale(1.15)" fill="none" stroke-linecap="round" stroke-linejoin="round"><path d="M-9 -3H9M-9 1H9M-9 5H9" stroke="#9c9c9c" stroke-width="3.2"/><path d="M-9 -3H9M-9 1H9M-9 5H9" stroke="#ececec" stroke-width="1.2"/></g>
<g transform="translate(667.0 254.0) rotate(-30.0) scale(1.15)" fill="none" stroke-linecap="round" stroke-linejoin="round"><path d="M-8 -2H8M-8 2.5H8" stroke="#9c9c9c" stroke-width="3.2"/><path d="M-8 -2H8M-8 2.5H8" stroke="#ececec" stroke-width="1.2"/></g>
<g transform="translate(712.0 274.0) rotate(-30.0) scale(1.15)" fill="none" stroke-linecap="round" stroke-linejoin="round"><path d="M-8 -2H8M-8 2.5H8" stroke="#9c9c9c" stroke-width="3.2"/><path d="M-8 -2H8M-8 2.5H8" stroke="#ececec" stroke-width="1.2"/></g>
<g transform="translate(883.0 250.0) rotate(-30.0) scale(1.15)" fill="none" stroke-linecap="round" stroke-linejoin="round"><path d="M-8 -2H8M-8 2.5H8" stroke="#9c9c9c" stroke-width="3.2"/><path d="M-8 -2H8M-8 2.5H8" stroke="#ececec" stroke-width="1.2"/></g>
<g transform="translate(920.0 312.0) rotate(-30.0) scale(1.15)" fill="none" stroke-linecap="round" stroke-linejoin="round"><path d="M-8 -2H8M-8 2.5H8" stroke="#9c9c9c" stroke-width="3.2"/><path d="M-8 -2H8M-8 2.5H8" stroke="#ececec" stroke-width="1.2"/></g>
<g transform="translate(948.0 275.0) rotate(0.0) scale(1.15)" fill="none" stroke-linecap="round" stroke-linejoin="round"><path d="M-9 -3H9M-9 1H9M-9 5H9" stroke="#9c9c9c" stroke-width="3.2"/><path d="M-9 -3H9M-9 1H9M-9 5H9" stroke="#ececec" stroke-width="1.2"/></g>
<g transform="translate(960.0 303.0) rotate(-30.0) scale(1.15)" fill="none" stroke-linecap="round" stroke-linejoin="round"><path d="M-10 4H10M-5 -6H1M-2 -6V4M-2 0.5Q1 -1 2.5 1" stroke="#9c9c9c" stroke-width="3.2"/><path d="M-10 4H10M-5 -6H1M-2 -6V4M-2 0.5Q1 -1 2.5 1" stroke="#ececec" stroke-width="1.2"/></g>
<g transform="translate(849.0 347.0) rotate(-60.0) scale(1.15)" fill="none" stroke-linecap="round" stroke-linejoin="round"><path d="M-8 4H8M0 4V-7" stroke="#9c9c9c" stroke-width="3.2"/><path d="M-8 4H8M0 4V-7" stroke="#ececec" stroke-width="1.2"/></g>
<g transform="translate(796.0 371.0) rotate(-30.0) scale(1.15)" fill="none" stroke-linecap="round" stroke-linejoin="round"><path d="M-10 4H10M-5 -6H1M-2 -6V4M-2 0.5Q1 -1 2.5 1" stroke="#9c9c9c" stroke-width="3.2"/><path d="M-10 4H10M-5 -6H1M-2 -6V4M-2 0.5Q1 -1 2.5 1" stroke="#ececec" stroke-width="1.2"/></g>
<g transform="translate(821.0 381.0) rotate(-30.0) scale(1.15)" fill="none" stroke-linecap="round" stroke-linejoin="round"><path d="M-10 4H10M-5 -6H1M-2 -6V4M-2 0.5Q1 -1 2.5 1" stroke="#9c9c9c" stroke-width="3.2"/><path d="M-10 4H10M-5 -6H1M-2 -6V4M-2 0.5Q1 -1 2.5 1" stroke="#ececec" stroke-width="1.2"/></g>
<g transform="translate(740.0 328.0) rotate(-30.0) scale(1.15)" fill="none" stroke-linecap="round" stroke-linejoin="round"><path d="M-10 4H10M-5 -6H1M-2 -6V4M-2 0.5Q1 -1 2.5 1" stroke="#9c9c9c" stroke-width="3.2"/><path d="M-10 4H10M-5 -6H1M-2 -6V4M-2 0.5Q1 -1 2.5 1" stroke="#ececec" stroke-width="1.2"/></g>
<g transform="translate(743.0 387.0) rotate(-30.0) scale(1.15)" fill="none" stroke-linecap="round" stroke-linejoin="round"><path d="M-10 4H10M-5 -6H1M-2 -6V4M-2 0.5Q1 -1 2.5 1" stroke="#9c9c9c" stroke-width="3.2"/><path d="M-10 4H10M-5 -6H1M-2 -6V4M-2 0.5Q1 -1 2.5 1" stroke="#ececec" stroke-width="1.2"/></g>
<g transform="translate(709.0 424.0) rotate(-30.0) scale(1.15)" fill="none" stroke-linecap="round" stroke-linejoin="round"><path d="M-10 4H10M-5 -6H1M-2 -6V4M-2 0.5Q1 -1 2.5 1" stroke="#9c9c9c" stroke-width="3.2"/><path d="M-10 4H10M-5 -6H1M-2 -6V4M-2 0.5Q1 -1 2.5 1" stroke="#ececec" stroke-width="1.2"/></g>
<circle cx="573" cy="238.5" r="8" fill="#9a9a9a" fill-opacity="0.55"/>
<circle cx="573" cy="238.5" r="4" fill="#8c5fd8" stroke="#333" stroke-width="1.5"/>
<circle cx="756.8" cy="345.1" r="4" fill="#fff" stroke="#8a8a8a" stroke-width="1.3"/>
<circle cx="965.2" cy="238.4" r="4" fill="#fff" stroke="#8a8a8a" stroke-width="1.3"/>
<circle cx="965.2" cy="300.0" r="4" fill="#fff" stroke="#8a8a8a" stroke-width="1.3"/></svg>
<!-- browser -->
<div class="a" style="left:4px;top:7px;width:300px;height:25px;background:#f0f0f0;border:1px solid #cfcfcf;box-sizing:border-box"></div>
<svg class="a" style="left:9px;top:16px" width="11" height="8"><path d="M5 0V8L0 4Z M10 0V8L5 4Z" fill="#444"/></svg>
<div class="t" style="left:29px;top:14px;font-size:11px;letter-spacing:-0.3px;color:#555">BROWSER</div>
<svg class="a" style="left:282px;top:14px" width="11" height="11"><circle cx="5.5" cy="5.5" r="5" fill="#222"/><rect x="2.5" y="4.8" width="6" height="1.6" fill="#fff"/></svg>
<div class="a" style="left:40px;top:37px;width:157px;height:20px;background:#e6e6e6;opacity:.9"></div>
<svg class="a" style="left:20px;top:40px" width="13" height="13"><defs><linearGradient id="trg" x1="1" y1="0" x2="0" y2="1"><stop offset="0" stop-color="#222"/><stop offset="1" stop-color="#ddd"/></linearGradient></defs><path d="M11.5 1V12H1Z" fill="url(#trg)" stroke="#111" stroke-width="1.2" stroke-linejoin="round"/></svg>
<svg class="a" style="left:42px;top:41px" width="18" height="12"><path d="M1 6Q9 -2 17 6Q9 14 1 6Z" fill="#9a9a9a"/><circle cx="9" cy="6" r="2.6" fill="#e6e6e6"/><circle cx="9" cy="6" r="1.3" fill="#9a9a9a"/></svg>
<div class="a" style="left:65px;top:37px;width:24px;height:20px;background:#8a8a8a"></div>
<svg class="a" style="left:67px;top:39px" width="20" height="17"><path d="M2 4L5 1H17V13L14 16H2Z" fill="#dde2ea" stroke="#333" stroke-width="1.1"/><path d="M2 4H14V16M14 4L17 1" stroke="#333" stroke-width="1" fill="none"/><path d="M3 2L5 1H16L14 3H3Z" fill="#fff"/></svg>
<svg class="a" style="left:92px;top:38px" width="17" height="17"><path d="M8.5 1L16 15.5H1Z" fill="#f0f000" stroke="#111" stroke-width="1.2" stroke-linejoin="round"/><rect x="7.8" y="6.5" width="1.5" height="5" fill="#111"/><rect x="7.8" y="12.5" width="1.5" height="1.5" fill="#111"/></svg>
<div class="a" style="left:115px;top:39px;width:57px;height:16px;background:#8a8a8a"></div>
<div class="t" style="left:123px;top:41px;font-size:12.5px;font-weight:bold;letter-spacing:-0.4px;color:#fff">Cool v3</div>
<svg class="a" style="left:175px;top:40px" width="15" height="15"><circle cx="7.5" cy="7.5" r="6" fill="#fff" stroke="#222" stroke-width="1.3"/><circle cx="7.5" cy="7.5" r="2.6" fill="#222"/></svg>

<div class="a" style="left:58px;top:61px;width:134px;height:20px;background:#ececec;opacity:.9"></div>
<svg class="a" style="left:39px;top:64px" width="11" height="14"><path d="M1 1L9.5 7L1 13Z" fill="#e2e4ea" stroke="#222" stroke-width="1.3" stroke-linejoin="round"/></svg>
<svg class="a" style="left:61px;top:63px" width="16" height="16"><path d="M8 0.5L9.5 2.5L12 1.5L12.5 4L15 4.5L14 7L15.5 8L14 9.5L15 12L12.5 12.5L12 15L9.5 14L8 15.5L6.5 14L4 15L3.5 12.5L1 12L2 9.5L0.5 8L2 6.5L1 4L3.5 3.5L4 1L6.5 2Z" fill="#8a8a8a"/><circle cx="8" cy="8" r="2.5" fill="#ececec"/></svg>
<div class="t" style="left:91px;top:65px;font-size:12px;letter-spacing:-0.55px;color:#333">Document Settings</div>

<div class="a" style="left:58px;top:85px;width:110px;height:20px;background:#ececec;opacity:.9"></div>
<svg class="a" style="left:39px;top:88px" width="11" height="14"><path d="M1 1L9.5 7L1 13Z" fill="#e2e4ea" stroke="#222" stroke-width="1.3" stroke-linejoin="round"/></svg>
<svg class="a" style="left:61px;top:89px" width="16" height="13"><path d="M0 1H6L7 3H16V13H0Z" fill="#8a8a8a"/><path d="M0 4H16" stroke="#ececec" stroke-width="0.8"/></svg>
<div class="t" style="left:91px;top:89px;font-size:12px;letter-spacing:-0.55px;color:#333">Named Views</div>

<div class="a" style="left:58px;top:109px;width:95px;height:20px;background:#ececec;opacity:.9"></div>
<svg class="a" style="left:39px;top:112px" width="11" height="14"><path d="M1 1L9.5 7L1 13Z" fill="#e2e4ea" stroke="#222" stroke-width="1.3" stroke-linejoin="round"/></svg>
<svg class="a" style="left:60px;top:113px" width="18" height="12"><path d="M1 6Q9 -2 17 6Q9 14 1 6Z" fill="none" stroke="#9a9a9a" stroke-width="1.2"/><circle cx="9" cy="6" r="2" fill="none" stroke="#9a9a9a"/><path d="M3 1L15 11" stroke="#9a9a9a" stroke-width="1.2"/></svg>
<svg class="a" style="left:86px;top:113px" width="16" height="13"><path d="M0 1H6L7 3H16V13H0Z" fill="#8a8a8a"/><path d="M0 4H16" stroke="#ececec" stroke-width="0.8"/></svg>
<div class="t" style="left:116px;top:113px;font-size:12px;letter-spacing:-0.55px;color:#333">Origin</div>

<div class="a" style="left:58px;top:133px;width:115px;height:20px;background:#ececec;opacity:.9"></div>
<svg class="a" style="left:39px;top:136px" width="11" height="14"><path d="M1 1L9.5 7L1 13Z" fill="#e2e4ea" stroke="#222" stroke-width="1.3" stroke-linejoin="round"/></svg>
<svg class="a" style="left:60px;top:137px" width="18" height="12"><path d="M1 6Q9 -2 17 6Q9 14 1 6Z" fill="#9a9a9a"/><circle cx="9" cy="6" r="2.6" fill="#ececec"/><circle cx="9" cy="6" r="1.3" fill="#9a9a9a"/></svg>
<svg class="a" style="left:86px;top:137px" width="16" height="13"><path d="M0 1H6L7 3H16V13H0Z" fill="#8a8a8a"/><path d="M0 4H16" stroke="#ececec" stroke-width="0.8"/></svg>
<div class="t" style="left:116px;top:137px;font-size:12px;letter-spacing:-0.55px;color:#333">Sketches</div>

<!-- viewcube -->
<div class="a" style="left:1514px;top:38px;width:51px;height:51px;background:rgba(234,234,234,.82);border:1px solid #a0a0a0;border-radius:2px;box-shadow:1px 2px 5px rgba(0,0,0,.12)"></div>
<div class="a" style="left:1524px;top:48px;width:31px;height:30px;background:rgba(215,218,222,.45)"></div>
<div class="t" style="left:1528px;top:57px;font-size:12px;font-weight:bold;letter-spacing:-0.5px;color:#8c8c8c">TOP</div>
<div class="t" style="left:1515px;top:24px;font-size:12px;color:#7ed67e">Y</div>
<div class="t" style="left:1567px;top:77px;font-size:12px;color:#f07a7a">X</div>
<div class="t" style="left:1507px;top:84px;font-size:12px;color:#6f6ff0">Z</div>
<div class="a" style="left:1564px;top:85px;width:2px;height:2px;background:#f07a7a"></div>

<!-- sketch palette -->
<div class="a" style="left:1346px;top:120px;width:250px;height:453px;background:#f0f0f0;border:1px solid #cfcfcf;box-shadow:0 1px 4px rgba(0,0,0,.12)"></div>
<div class="a" style="left:1347px;top:144px;width:248px;height:1px;background:#d4d4d4"></div>
<svg class="a" style="left:1357px;top:127px" width="11" height="11"><circle cx="5.5" cy="5.5" r="5" fill="#333"/><rect x="2.5" y="4.8" width="6" height="1.6" fill="#fff"/></svg>
<div class="t" style="left:1371px;top:126px;font-size:11px;letter-spacing:-0.45px;color:#555">SKETCH PALETTE</div>
<svg class="a" style="left:1580px;top:128px" width="11" height="9"><path d="M0 0V8L5 4Z M5 0V8L10 4Z" fill="#222"/></svg>
<svg class="a" style="left:1355px;top:155px" width="10" height="8"><path d="M0 0H10L5 7Z" fill="#333"/></svg>
<div class="t" style="left:1371px;top:154px;font-size:12.5px;font-weight:bold;letter-spacing:-0.5px;color:#333">Options</div>
<div class="t" style="left:1359px;top:184px;font-size:12px;letter-spacing:-0.45px;color:#333">Linetype</div>
<div class="t" style="left:1359px;top:214px;font-size:12px;letter-spacing:-0.45px;color:#333">Look At</div>
<div class="t" style="left:1359px;top:244px;font-size:12px;letter-spacing:-0.45px;color:#333">Sketch Grid</div>
<div class="t" style="left:1359px;top:274px;font-size:12px;letter-spacing:-0.45px;color:#333">Snap</div>
<div class="t" style="left:1359px;top:304px;font-size:12px;letter-spacing:-0.45px;color:#333">Slice</div>
<div class="t" style="left:1359px;top:334px;font-size:12px;letter-spacing:-0.45px;color:#333">Profile</div>
<svg class="a" style="left:1494px;top:182px" width="17" height="17"><path d="M15 2L2 8.5L15 15" stroke="#e07b2a" stroke-width="1" fill="none"/><path d="M1 8.5H16" stroke="#e07b2a" stroke-width="1" stroke-dasharray="2 1.5"/></svg>
<svg class="a" style="left:1523px;top:181px" width="17" height="17"><path d="M4 1H12Q15 1 15 4V5Q16 8.5 15 12V13Q15 16 12 16H4Q1 16 1 13V12Q2 8.5 1 5V4Q1 1 4 1Z" fill="none" stroke="#c8c8c8" stroke-width="1"/><path d="M2 8.5H15" stroke="#e8a070" stroke-width="0.8" stroke-dasharray="2 1.5"/></svg>
<svg class="a" style="left:1494px;top:211px" width="18" height="16"><path d="M1 6H17V15H1Z" fill="#f4f4f4" stroke="#333" stroke-width="1.1"/><rect x="4" y="8.5" width="10" height="4" fill="#9bb0d0" stroke="#333" stroke-width="0.8"/><path d="M2 5L3 1L6 3M16 5L15 1L11 3" stroke="#333" stroke-width="1" fill="none"/></svg>
<div class="a" style="left:1496px;top:243px;width:14px;height:14px;border:1px solid #555;border-radius:3px;background:linear-gradient(#f4f4f4,#dcdcdc)"></div>
<svg class="a" style="left:1497px;top:244px" width="12" height="12"><path d="M2.5 6.5L5 9.5L10 1.5" stroke="#111" stroke-width="1.2" fill="none"/></svg>
<div class="a" style="left:1496px;top:273px;width:14px;height:14px;border:1px solid #555;border-radius:3px;background:linear-gradient(#f4f4f4,#dcdcdc)"></div>
<svg class="a" style="left:1497px;top:274px" width="12" height="12"><path d="M2.5 6.5L5 9.5L10 1.5" stroke="#111" stroke-width="1.2" fill="none"/></svg>
<div class="a" style="left:1496px;top:303px;width:14px;height:14px;border:1px solid #555;border-radius:3px;background:linear-gradient(#f4f4f4,#dcdcdc)"></div>
<div class="a" style="left:1496px;top:333px;width:14px;height:14px;border:1px solid #555;border-radius:3px;background:linear-gradient(#f4f4f4,#dcdcdc)"></div>
<svg class="a" style="left:1497px;top:334px" width="12" height="12"><path d="M2.5 6.5L5 9.5L10 1.5" stroke="#111" stroke-width="1.2" fill="none"/></svg>
<div class="a" style="left:1496px;top:363px;width:14px;height:14px;border:1px solid #555;border-radius:3px;background:linear-gradient(#f4f4f4,#dcdcdc)"></div>
<svg class="a" style="left:1497px;top:364px" width="12" height="12"><path d="M2.5 6.5L5 9.5L10 1.5" stroke="#111" stroke-width="1.2" fill="none"/></svg>
<div class="a" style="left:1496px;top:393px;width:14px;height:14px;border:1px solid #555;border-radius:3px;background:linear-gradient(#f4f4f4,#dcdcdc)"></div>
<svg class="a" style="left:1497px;top:394px" width="12" height="12"><path d="M2.5 6.5L5 9.5L10 1.5" stroke="#111" stroke-width="1.2" fill="none"/></svg>
<div class="a" style="left:1496px;top:423px;width:14px;height:14px;border:1px solid #555;border-radius:3px;background:linear-gradient(#f4f4f4,#dcdcdc)"></div>
<svg class="a" style="left:1497px;top:424px" width="12" height="12"><path d="M2.5 6.5L5 9.5L10 1.5" stroke="#111" stroke-width="1.2" fill="none"/></svg>
<div class="a" style="left:1496px;top:453px;width:14px;height:14px;border:1px solid #555;border-radius:3px;background:linear-gradient(#f4f4f4,#dcdcdc)"></div>
<svg class="a" style="left:1497px;top:454px" width="12" height="12"><path d="M2.5 6.5L5 9.5L10 1.5" stroke="#111" stroke-width="1.2" fill="none"/></svg>
<div class="a" style="left:1496px;top:483px;width:14px;height:14px;border:1px solid #555;border-radius:3px;background:linear-gradient(#f4f4f4,#dcdcdc)"></div>
<svg class="a" style="left:1497px;top:484px" width="12" height="12"><path d="M2.5 6.5L5 9.5L10 1.5" stroke="#111" stroke-width="1.2" fill="none"/></svg>
<div class="a" style="left:1496px;top:513px;width:14px;height:14px;border:1px solid #555;border-radius:3px;background:linear-gradient(#f4f4f4,#dcdcdc)"></div>
<div class="a" style="left:1347px;top:536px;width:248px;height:1px;background:#d8d8d8"></div>
<div class="a" style="left:1502px;top:543px;width:82px;height:23px;border:1px solid #b4b4b4;background:#ebebeb"></div>
<div class="t" style="left:1506px;top:548px;font-size:12.5px;color:#555">Finish Sketch</div>
<div class="a" style="left:4px;top:644px;width:290px;height:24px;background:#f0f0f0;border:1px solid #cfcfcf"></div>
<div class="t" style="left:29px;top:651px;font-size:11px;letter-spacing:-0.5px;color:#555">COMMENTS</div>
</div><!-- TIMELINE -->
<div id="timeline" class="a">
 <svg class="a" style="left:10px;top:17px" width="115" height="16"><g fill="#333"><rect x="0.5" y="1" width="2.2" height="14"/><path d="M13 1V15L3 8Z"/><path d="M35 1V15L25 8Z"/><rect x="36" y="5" width="2.5" height="6"/><path d="M51 1V15L62 8Z"/><rect x="74.5" y="5" width="2.5" height="6"/><path d="M78 1V15L88 8Z"/><path d="M101 1V15L111 8Z"/><rect x="111" y="1" width="2.2" height="14"/></g></svg>
 <svg class="a" style="left:145px;top:9px" width="30" height="34"><rect x="1.5" y="7.5" width="14" height="13" fill="none" stroke="#555" stroke-width="1" stroke-dasharray="2 1.5"/><g fill="#1e96d6"><rect x="0" y="6" width="3" height="3"/><rect x="14" y="6" width="3" height="3"/><rect x="0" y="19" width="3" height="3"/></g><path d="M10 22L16 15L18 17L12 24Z" fill="#f2b33d"/><circle cx="17.5" cy="15.5" r="1.5" fill="#e04040"/><rect x="8" y="25" width="2" height="6" fill="#ccc"/><path d="M15 1H27L22 8V33H20V8Z" fill="#555"/></svg>
 <svg class="a" style="left:1570px;top:16px" width="18" height="18"><path d="M9 0.5L10.6 3L13.5 2L14 5L17 5.5L16 8.3L17.8 10L15.5 11.5L16.3 14.5L13.3 14.5L12.5 17.5L10 16L7.5 17.8L6.3 15L3.3 15.2L3.6 12.2L0.8 11L2.6 8.6L1 6L4 5.4L4.3 2.3L7.2 3.2Z" fill="#8a8a8a"/><circle cx="9" cy="9" r="3" fill="#f0f0f0"/></svg>
</div>
<!-- PARAMETERS DIALOG -->
<div class="a" style="left:283px;top:504px;width:1202px;height:400px;background:#f0f0f0;border:1px solid #8c8c8c;border-top-color:#fff;box-shadow:0 0 14px rgba(0,0,0,.28)">
 <div class="a" style="left:-1px;top:-2px;width:1202px;height:1px;background:#8c8c8c"></div>
 <div class="a" style="left:0;top:0;width:1200px;height:30px;background:#fff"></div>
 <div class="t" style="left:8px;top:8px;font-size:11.5px;letter-spacing:-0.5px;color:#1a1a1a">PARAMETERS</div>
 <svg class="a" style="left:1178px;top:7px" width="14" height="14"><path d="M1 1L13 13M13 1L1 13" stroke="#222" stroke-width="1.3"/></svg>
 <div class="a" style="left:24px;top:52px;width:23px;height:23px;background:#cfe2f3"></div>
 <div class="t" style="left:28px;top:55px;font-size:17px;font-style:italic;font-family:'Liberation Serif',serif;color:#555">fx</div>
 <div class="a" style="left:58px;top:52px;width:2px;height:23px;background:#bdbdbd"></div>
 <div class="t" style="left:74px;top:57px;font-size:13px;font-style:italic;font-family:'Liberation Serif',serif;color:#555">fx</div>
 <svg class="a" style="left:82px;top:65px" width="9" height="8"><circle cx="4.5" cy="2.5" r="2.2" fill="#1e96d6"/><path d="M0 8Q0 4.5 4.5 4.5Q9 4.5 9 8Z" fill="#1e96d6"/></svg>
 <svg class="a" style="left:104px;top:55px" width="16" height="16"><path d="M8 0.5L10.2 5.6L15.6 6L11.5 9.6L12.8 15L8 12.1L3.2 15L4.5 9.6L0.4 6L5.8 5.6Z" fill="#5c5c5c"/></svg>
 <div class="a" style="left:156px;top:52px;width:750px;height:23px;background:#fff;border:1px solid #a4a4a4"></div>
 <div class="t" style="left:161px;top:56px;font-size:13px;color:#8a8a8a;letter-spacing:0.2px">Filter all parameters</div>
 <svg class="a" style="left:943px;top:57px" width="13" height="13"><path d="M6.5 0V13M0 6.5H13" stroke="#555" stroke-width="1.6"/></svg>
 <svg class="a" style="left:971px;top:56px" width="15" height="16"><path d="M1 1H7L8 2V11H1Z" fill="#aaa"/><path d="M6 4H11L14 7V15H6Z" fill="#aaa" stroke="#f0f0f0" stroke-width="1"/></svg>
 <svg class="a" style="left:1001px;top:55px" width="13" height="17"><rect x="0" y="2" width="13" height="2" fill="#aaa"/><rect x="4" y="0" width="5" height="2" fill="#aaa"/><path d="M1 5H12L11 16H2Z" fill="#aaa"/></svg>
 <div class="a" style="left:1052px;top:57px;width:14px;height:14px;border:1px solid #333;background:#fff"></div>
 <svg class="a" style="left:1053px;top:58px" width="12" height="12"><path d="M2 6.5L4.8 9.5L10.5 1.5" stroke="#222" stroke-width="1.2" fill="none"/></svg>
 <div class="t" style="left:1068px;top:57px;font-size:13.2px;letter-spacing:-0.2px;color:#222">Automatic Update</div>

 <div class="a" style="left:23px;top:94px;width:1154px;height:310px;background:#f4f4f4;border:1px solid #7f8790"></div>
 <div class="a" style="left:24px;top:95px;width:1152px;height:28px;background:#fff"></div>
 <div class="a" style="left:24px;top:95px;width:229px;height:28px;background:#d6e7f6"></div>
 <svg class="a" style="left:134px;top:96px" width="9" height="6"><path d="M0.5 0.5L4.5 4.5L8.5 0.5" stroke="#777" stroke-width="1" fill="none"/></svg>
 <div class="a" style="left:253px;top:95px;width:1px;height:28px;background:#e2e2e2"></div>
 <div class="a" style="left:373px;top:95px;width:1px;height:28px;background:#e2e2e2"></div>
 <div class="a" style="left:443px;top:95px;width:1px;height:28px;background:#e2e2e2"></div>
 <div class="a" style="left:833px;top:95px;width:1px;height:28px;background:#e2e2e2"></div>
 <div class="a" style="left:1013px;top:95px;width:1px;height:28px;background:#e2e2e2"></div>
 <div class="t" style="left:29px;top:101px;font-size:15px;color:#222">Parameter</div>
 <div class="t" style="left:257px;top:101px;font-size:15px;color:#222">Name</div>
 <div class="t" style="left:378px;top:101px;font-size:15px;color:#222">Unit</div>
 <div class="t" style="left:448px;top:101px;font-size:15px;color:#222">Expression</div>
 <div class="t" style="left:838px;top:101px;font-size:15px;color:#222">Value</div>
 <div class="t" style="left:1017px;top:101px;font-size:15px;color:#222">Comments</div>

 <div class="a" style="left:44px;top:123px;width:1132px;height:50px;background:#ececec"></div>
 <svg class="a" style="left:47px;top:128px" width="16" height="15"><path d="M8 0.5L10.2 5.4L15.6 5.8L11.5 9.3L12.8 14.6L8 11.8L3.2 14.6L4.5 9.3L0.4 5.8L5.8 5.4Z" fill="#1e96d6"/></svg>
 <div class="t" style="left:69px;top:128px;font-size:15px;color:#1a1a1a;-webkit-text-stroke:0.2px #1a1a1a;transform:scaleX(1.045);transform-origin:0 0">Favorites</div>
 <svg class="a" style="left:28px;top:157px" width="11" height="8"><path d="M1 1.5L5.5 6L10 1.5" stroke="#333" stroke-width="1.6" fill="none"/></svg>
 <div class="t" style="left:47px;top:152px;font-size:17px;font-style:italic;font-family:'Liberation Serif',serif;color:#777">fx</div>
 <div class="t" style="left:69px;top:153px;font-size:15px;color:#1a1a1a;-webkit-text-stroke:0.2px #1a1a1a;transform:scaleX(1.04);transform-origin:0 0">User Parameters</div>
<div class="a" style="left:64px;top:173px;width:1112px;height:21px;background:#f4f4f4"></div>
<svg class="a" style="left:66px;top:176px" width="15" height="14"><path d="M7.5 1L9.4 5.3L14 5.7L10.5 8.7L11.6 13.2L7.5 10.8L3.4 13.2L4.5 8.7L1 5.7L5.6 5.3Z" fill="none" stroke="#555" stroke-width="1"/></svg>
<div class="t" style="left:89px;top:177px;font-size:13px;color:#222">User Parameter</div>
<div class="t" style="left:257px;top:177px;font-size:13px;color:#222">side</div>
<div class="t" style="left:377px;top:177px;font-size:13px;color:#222">mm</div>
<div class="t" style="left:447px;top:177px;font-size:13px;color:#222">50 mm</div>
<div class="t" style="left:837px;top:177px;font-size:13px;color:#222">50.00</div>
<div class="a" style="left:64px;top:194px;width:1112px;height:21px;background:#fff"></div>
<svg class="a" style="left:66px;top:197px" width="15" height="14"><path d="M7.5 1L9.4 5.3L14 5.7L10.5 8.7L11.6 13.2L7.5 10.8L3.4 13.2L4.5 8.7L1 5.7L5.6 5.3Z" fill="none" stroke="#555" stroke-width="1"/></svg>
<div class="t" style="left:89px;top:198px;font-size:13px;color:#222">User Parameter</div>
<div class="t" style="left:257px;top:198px;font-size:13px;color:#222">gheight</div>
<div class="t" style="left:377px;top:198px;font-size:13px;color:#222">mm</div>
<div class="t" style="left:447px;top:198px;font-size:13px;color:#222">10 mm</div>
<div class="t" style="left:837px;top:198px;font-size:13px;color:#222">10.00</div>
<div class="a" style="left:64px;top:215px;width:1112px;height:21px;background:#f4f4f4"></div>
<svg class="a" style="left:66px;top:218px" width="15" height="14"><path d="M7.5 1L9.4 5.3L14 5.7L10.5 8.7L11.6 13.2L7.5 10.8L3.4 13.2L4.5 8.7L1 5.7L5.6 5.3Z" fill="none" stroke="#555" stroke-width="1"/></svg>
<div class="t" style="left:89px;top:219px;font-size:13px;color:#222">User Parameter</div>
<div class="t" style="left:257px;top:219px;font-size:13px;color:#222">glength</div>
<div class="t" style="left:377px;top:219px;font-size:13px;color:#222">mm</div>
<div class="t" style="left:447px;top:219px;font-size:13px;color:#222">4 mm</div>
<div class="t" style="left:837px;top:219px;font-size:13px;color:#222">4.00</div>
<div class="a" style="left:64px;top:236px;width:1112px;height:21px;background:#fff"></div>
<svg class="a" style="left:66px;top:239px" width="15" height="14"><path d="M7.5 1L9.4 5.3L14 5.7L10.5 8.7L11.6 13.2L7.5 10.8L3.4 13.2L4.5 8.7L1 5.7L5.6 5.3Z" fill="none" stroke="#555" stroke-width="1"/></svg>
<div class="t" style="left:89px;top:240px;font-size:13px;color:#222">User Parameter</div>
<div class="t" style="left:257px;top:240px;font-size:13px;color:#222">slant</div>
<div class="t" style="left:377px;top:240px;font-size:13px;color:#222">mm</div>
<div class="t" style="left:447px;top:240px;font-size:13px;color:#222">side / 2</div>
<div class="t" style="left:837px;top:240px;font-size:13px;color:#222">25.00</div>
<div class="a" style="left:64px;top:257px;width:1112px;height:21px;background:#f4f4f4"></div>
<svg class="a" style="left:66px;top:260px" width="15" height="14"><path d="M7.5 1L9.4 5.3L14 5.7L10.5 8.7L11.6 13.2L7.5 10.8L3.4 13.2L4.5 8.7L1 5.7L5.6 5.3Z" fill="none" stroke="#555" stroke-width="1"/></svg>
<div class="t" style="left:89px;top:261px;font-size:13px;color:#222">User Parameter</div>
<div class="t" style="left:257px;top:261px;font-size:13px;color:#222">slantside12</div>
<div class="t" style="left:377px;top:261px;font-size:13px;color:#222">mm</div>
<div class="t" style="left:447px;top:261px;font-size:13px;color:#222">35.556 mm</div>
<div class="t" style="left:837px;top:261px;font-size:13px;color:#222">35.556</div>
<div class="a" style="left:44px;top:278px;width:1132px;height:25px;background:#ececec"></div>
<svg class="a" style="left:28px;top:287px" width="11" height="8"><path d="M1 1.5L5.5 6L10 1.5" stroke="#333" stroke-width="1.6" fill="none"/></svg>
<svg class="a" style="left:47px;top:282px" width="18" height="18"><path d="M1 4L4 1H16V14L13 17H1Z" fill="#e8e8e8" stroke="#333" stroke-width="1"/><path d="M1 4H13V17M13 4L16 1" stroke="#333" stroke-width="1" fill="none"/></svg>
<div class="t" style="left:69px;top:283px;font-size:15px;color:#1a1a1a;-webkit-text-stroke:0.2px #1a1a1a;transform:scaleX(1.04);transform-origin:0 0">Model Parameters</div>
<svg class="a" style="left:50px;top:308px" width="8" height="12"><path d="M1.5 1L6 6L1.5 11" stroke="#888" stroke-width="1.3" fill="none"/></svg>
<svg class="a" style="left:66px;top:305px" width="18" height="18"><path d="M1 4L4 1H9V8H16V17H1Z" fill="#fff" stroke="#444" stroke-width="1"/><path d="M1 4H9M9 8L11 6H16M9 8V17" stroke="#444" stroke-width="1" fill="none"/></svg>
<div class="t" style="left:89px;top:307px;font-size:13px;color:#222">Cool v3</div>
</div><!-- TASKBAR -->
<div id="taskbar" class="a">
 <div class="a" style="left:0;top:0;width:48px;height:40px;background:#1f1f29"></div>
 <svg class="a" style="left:15px;top:12px" width="17" height="17"><g fill="#fff"><path d="M0 2.3L7 1.3V8H0Z"/><path d="M8 1.1L17 0V8H8Z"/><path d="M0 9H7V15.7L0 14.7Z"/><path d="M8 9H17V17L8 15.9Z"/></g></svg>
 <div class="a" style="left:48px;top:0;width:288px;height:40px;background:#f3f3f3"></div>
 <svg class="a" style="left:59px;top:12px" width="18" height="18"><circle cx="11" cy="7" r="5.5" fill="none" stroke="#222" stroke-width="1.4"/><path d="M7 11L1 17" stroke="#222" stroke-width="1.6"/></svg>
 <div class="t" style="left:88px;top:13px;font-size:14.6px;letter-spacing:-0.1px;color:#333">Type here to search</div>
 <svg class="a" style="left:260px;top:2px" width="72" height="36"><path d="M3 6L12 20L16 17Z" fill="#b9bcc0"/><path d="M13 19L20 30L23 28L16 17Z" fill="#c9965a"/><path d="M17 3L22 1L27 12L23 14Z" fill="#d8a878"/><path d="M22 13L28 11L30 15L24 17Z" fill="#ddd"/><path d="M24 17L30 15L33 32L29 34Z" fill="#c9965a"/><path d="M36 10L42 18L48 6L54 18L60 8L66 18L66 28L36 28Z" fill="#d9a83a" stroke="#9a6a18" stroke-width="0.8"/><rect x="36" y="24" width="30" height="6" fill="#c7922a"/><circle cx="51" cy="27" r="2" fill="#d23030"/><circle cx="43" cy="27" r="1.5" fill="#2fb0b0"/><circle cx="59" cy="27" r="1.5" fill="#2fb0b0"/><circle cx="48" cy="12" r="2" fill="#2fb0b0"/></svg>
 <svg class="a" style="left:351px;top:12px" width="18" height="16"><path d="M1 1H4M1 15H4M2.5 1V15M15 1H17M15 15H17M16 1V15" stroke="#fff" stroke-width="1.2" fill="none"/><rect x="4" y="4" width="10" height="8" fill="none" stroke="#fff" stroke-width="1.2"/></svg>
 <svg class="a" style="left:398px;top:7px" width="26" height="26"><defs><linearGradient id="edg" x1="0" y1="0" x2="1" y2="1"><stop offset="0" stop-color="#36c3f0"/><stop offset="0.6" stop-color="#1a8ad8"/><stop offset="1" stop-color="#1560b8"/></linearGradient></defs><path d="M13 1Q24 1 25 12Q25 16 20 16H9Q9 21 15 22Q20 22 24 19Q21 25 13 25Q3 25 1 15Q1 5 9 2Q4 6 5 11Q8 7 13 7Q17 7 18 11Q20 6 13 1Z" fill="url(#edg)"/><path d="M1 15Q1 5 9 2Q4 6 5 11Q6 21 15 22Q20 22 24 19Q21 25 13 25Q3 25 1 15Z" fill="#2ea44f" opacity="0.55"/></svg>
 <svg class="a" style="left:447px;top:9px" width="25" height="23"><path d="M7 5Q7 0 12.5 0Q18 0 18 5" fill="none" stroke="#2b88d8" stroke-width="1.6"/><rect x="0" y="4" width="25" height="19" rx="3" fill="#e8e8e8"/><rect x="7" y="8" width="5" height="5" fill="#f35325"/><rect x="13" y="8" width="5" height="5" fill="#81bc06"/><rect x="7" y="14" width="5" height="5" fill="#05a6f0"/><rect x="13" y="14" width="5" height="5" fill="#ffba08"/></svg>
 <svg class="a" style="left:496px;top:9px" width="26" height="22"><path d="M0 8L13 0L26 8V22H0Z" fill="#0a64c8"/><path d="M0 8L13 17L26 8V22H0Z" fill="#3ba0f0"/><path d="M0 22L13 13L26 22Z" fill="#68c0ff"/></svg>
 <svg class="a" style="left:545px;top:7px" width="26" height="26"><circle cx="13" cy="13" r="12.5" fill="#db4437"/><path d="M13 13L2.2 6.8A12.5 12.5 0 0 0 13 25.5Z" fill="#0f9d58"/><path d="M13 13L13 25.5A12.5 12.5 0 0 0 23.8 6.8Z" fill="#ffcd40"/><path d="M13 13L2.2 6.8A12.5 12.5 0 0 1 23.8 6.8Z" fill="#db4437"/><circle cx="13" cy="13" r="5.8" fill="#fff"/><circle cx="13" cy="13" r="4.6" fill="#1a73e8"/></svg>
 <svg class="a" style="left:595px;top:9px" width="24" height="21"><path d="M0 2H8L10 4H23V21H0Z" fill="#f0c23a"/><path d="M0 7H24V21H0Z" fill="#ffd75e"/><rect x="7" y="12" width="10" height="9" fill="#3a78c8"/><rect x="9.5" y="15" width="5" height="6" fill="#ffd75e"/></svg>
 <svg class="a" style="left:643px;top:7px" width="26" height="26"><path d="M19 1L25 4V22L19 25L7 14L3 17L1 16V10L3 9L7 12Z" fill="#1a8ad8"/><path d="M19 1L25 4V22L19 25V18L11 13L19 7Z" fill="#2fa7f2"/><path d="M19 7V19L11 13Z" fill="#3a3a3a"/></svg>
 <div class="a" style="left:681px;top:0;width:48px;height:40px;background:#5a5a5a"></div>
 <svg class="a" style="left:693px;top:7px" width="24" height="26"><rect x="0" y="0" width="23" height="25" rx="3" fill="#f47b20"/><rect x="2" y="16" width="19" height="8" rx="1" fill="#a8410c"/><text x="6.5" y="14" font-size="13" font-weight="bold" fill="#fff" font-family="Liberation Sans">F</text><text x="5" y="22.5" font-size="6" font-weight="bold" fill="#f7c7a0" font-family="Liberation Sans">360</text></svg>
 <div class="a" style="left:538px;top:38px;width:40px;height:2px;background:#79b3e6"></div>
 <div class="a" style="left:587px;top:38px;width:40px;height:2px;background:#79b3e6"></div>
 <div class="a" style="left:636px;top:38px;width:40px;height:2px;background:#79b3e6"></div>
 <div class="a" style="left:681px;top:38px;width:48px;height:2px;background:#79b3e6"></div>
 <svg class="a" style="left:1211px;top:10px" width="26" height="21"><circle cx="18" cy="7" r="6" fill="#f7a21b"/><path d="M4 20Q0 20 0 16Q0 12 5 12Q6 6 12 6Q18 6 19 11Q25 11 25 16Q25 20 21 20Z" fill="#9ec8f0"/><path d="M4 20Q0 20 0 16Q10 17 25 16Q25 20 21 20Z" fill="#6fa8e0"/></svg>
 <div class="t" style="left:1244px;top:13px;font-size:14.5px;letter-spacing:-0.25px;color:#fff">29°C&nbsp;&nbsp;Mostly cloudy</div>
 <svg class="a" style="left:1392px;top:15px" width="13" height="8"><path d="M1 7L6.5 1.5L12 7" stroke="#fff" stroke-width="1.2" fill="none"/></svg>
 <svg class="a" style="left:1417px;top:11px" width="14" height="18"><rect x="1" y="5" width="8" height="8" rx="1.5" fill="none" stroke="#fff" stroke-width="1.1"/><path d="M9 7L13 5V13L9 11" fill="none" stroke="#fff" stroke-width="1.1"/><path d="M2 2Q5 0 8 2M2 16Q5 18 8 16" stroke="#fff" stroke-width="1" fill="none"/></svg>
 <svg class="a" style="left:1438px;top:12px" width="18" height="17"><path d="M1 1H17V11H1Z" fill="none" stroke="#fff" stroke-width="1.1"/><path d="M9 11V15M5 15.5H13" stroke="#fff" stroke-width="1.1"/><rect x="1" y="1" width="5" height="5" fill="none" stroke="#fff" stroke-width="1"/></svg>
 <svg class="a" style="left:1463px;top:12px" width="15" height="16"><path d="M1 5H4L8 1V15L4 11H1Z" fill="none" stroke="#fff" stroke-width="1.1"/><path d="M10 5L14 10M14 5L10 10" stroke="#fff" stroke-width="1.1"/></svg>
 <div class="t" style="left:1494px;top:6px;font-size:12px;letter-spacing:-0.2px;color:#fff">6:07 PM</div>
 <div class="t" style="left:1489px;top:23px;font-size:12px;letter-spacing:-0.2px;color:#fff">8/25/2023</div>
 <svg class="a" style="left:1559px;top:12px" width="17" height="16"><path d="M1 1H16V12H9L6 15V12H1Z" fill="none" stroke="#fff" stroke-width="1.1"/></svg>
</div>
</body></html>
